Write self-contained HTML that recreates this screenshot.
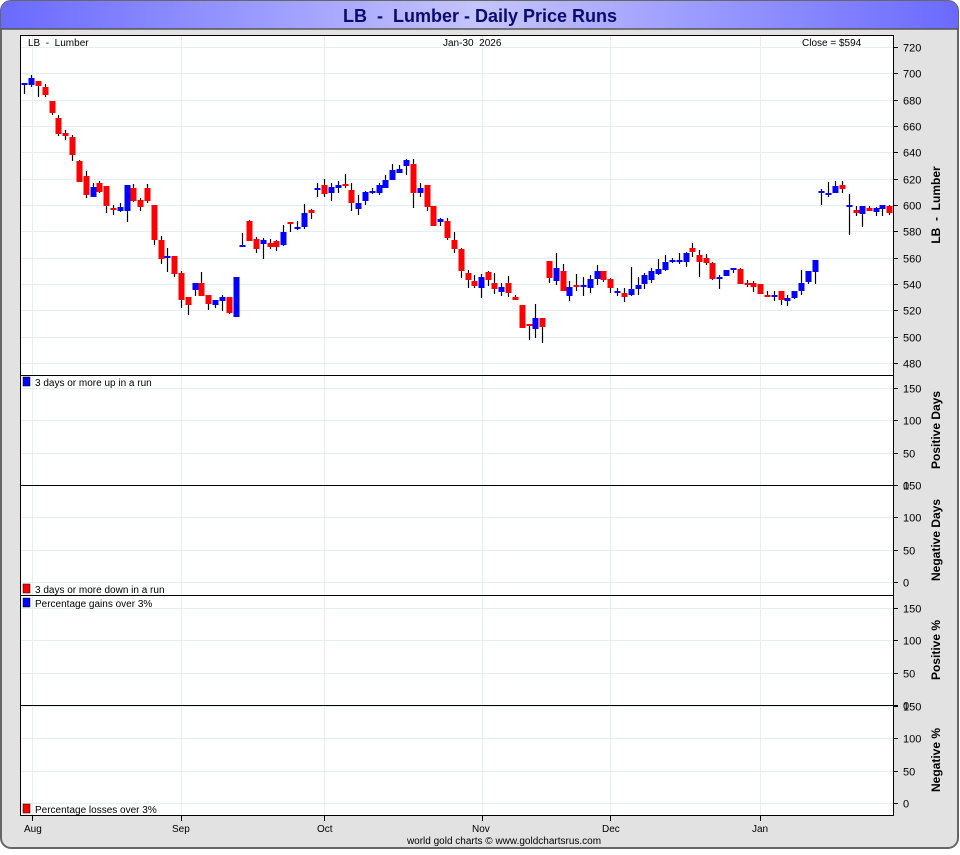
<!DOCTYPE html>
<html><head><meta charset="utf-8"><style>
body{margin:0;width:960px;height:850px;overflow:hidden;background:#fff;font-family:"Liberation Sans",sans-serif}
text{white-space:pre}
</style></head><body>
<svg id="s" width="960" height="850" xmlns="http://www.w3.org/2000/svg" font-family="Liberation Sans, sans-serif" xml:space="preserve">
<defs><linearGradient id="g" x1="0" x2="1"><stop offset="0" stop-color="#6a6aff"/><stop offset="0.5" stop-color="#c4c4ff"/><stop offset="1" stop-color="#6a6aff"/></linearGradient></defs>
<rect x="1" y="1" width="957" height="847" rx="10" fill="#e2e2e2" stroke="#666" stroke-width="2"/>
<path d="M1 29 V11 A10 10 0 0 1 11 1 H948 A10 10 0 0 1 958 11 V29 Z" fill="url(#g)"/>
<line x1="1" y1="29" x2="958" y2="29" stroke="#555" stroke-width="1.5"/>
<text x="480" y="22" text-anchor="middle" font-size="18" font-weight="bold" fill="#0a0a70">LB  -  Lumber - Daily Price Runs</text>
<rect x="20.5" y="35.5" width="873" height="780" fill="#fff" stroke="#000"/>
<g id="grid" stroke="#e4eef7" stroke-width="1"></g>
<g id="c"></g>
<g stroke="#000"><line x1="20" y1="375.5" x2="893" y2="375.5"/><line x1="20" y1="485.5" x2="893" y2="485.5"/><line x1="20" y1="595.5" x2="893" y2="595.5"/><line x1="20" y1="705.5" x2="893" y2="705.5"/><line x1="20" y1="815.5" x2="893" y2="815.5"/></g>
<g font-size="10" fill="#000">
<text x="28" y="46">LB  -  Lumber</text><text x="443" y="46">Jan-30  2026</text><text x="802" y="46">Close = $594</text>
<rect x="23" y="377" width="7" height="9" fill="#00f" stroke="#000" stroke-width=".5"/><text x="35" y="386">3 days or more up in a run</text>
<rect x="23" y="584" width="7" height="9" fill="#f00" stroke="#000" stroke-width=".5"/><text x="35" y="593">3 days or more down in a run</text>
<rect x="23" y="598" width="7" height="9" fill="#00f" stroke="#000" stroke-width=".5"/><text x="35" y="607">Percentage gains over 3%</text>
<rect x="23" y="804" width="7" height="9" fill="#f00" stroke="#000" stroke-width=".5"/><text x="35" y="813">Percentage losses over 3%</text>
<text x="24" y="832">Aug</text><text x="172" y="832">Sep</text><text x="317" y="832">Oct</text><text x="472" y="832">Nov</text><text x="602" y="832">Dec</text><text x="752" y="832">Jan</text>
<text x="504" y="844" text-anchor="middle">world gold charts © www.goldchartsrus.com</text>
</g>
<g id="ax" font-size="11" fill="#000"></g>
<g font-size="12" font-weight="bold" fill="#000">
<text transform="translate(940,205) rotate(-90)" text-anchor="middle">LB  -  Lumber</text>
<text transform="translate(940,430) rotate(-90)" text-anchor="middle">Positive Days</text>
<text transform="translate(940,540) rotate(-90)" text-anchor="middle">Negative Days</text>
<text transform="translate(940,650) rotate(-90)" text-anchor="middle">Positive %</text>
<text transform="translate(940,760) rotate(-90)" text-anchor="middle">Negative %</text>
</g>
</svg>
<script>
var N="http://www.w3.org/2000/svg";
function el(p,t,a,tx){var e=document.createElementNS(N,t);for(var k in a)e.setAttribute(k,a[k]);if(tx!=null)e.textContent=tx;document.getElementById(p).appendChild(e);}
[32,181,324,482,610,760].forEach(function(x){el("grid","line",{x1:x+.5,y1:36,x2:x+.5,y2:815});el("ax","line",{x1:x+.5,y1:816,x2:x+.5,y2:821,stroke:"#000"});});
for(var p=480;p<=720;p+=20){var y=Math.round(47+(720-p)*1.317)+.5;el("grid","line",{x1:21,y1:y,x2:893,y2:y});el("ax","line",{x1:893,y1:y,x2:898,y2:y,stroke:"#000"});el("ax","text",{x:903,y:y+4},p);}
[485,582,705,803].forEach(function(z){for(var v=0;v<=150;v+=50){var y=Math.round(z-v*0.65)+.5;if(y>376&&y<815&&y!=485.5&&y!=705.5)el("grid","line",{x1:21,y1:y,x2:893,y2:y});el("ax","line",{x1:893,y1:y,x2:898,y2:y,stroke:"#000"});el("ax","text",{x:903,y:y+4},v);}});
var C=[[24,83,85,83,94,'b'],[31,78,85,75,87,'b'],[38,81,86,81,97,'r'],[45,87,95,84,97,'r'],[52,101,113,101,115,'r'],[58,118,134,115,136,'r'],[65,133,136,130,140,'r'],[72,137,155,135,161,'r'],[79,161,182,160,182,'r'],[86,176,195,171,198,'r'],[93,187,197,183,197,'b'],[99,183,192,181,193,'r'],[106,186,206,186,213,'r'],[113,208,210,205,215,'r'],[120,207,211,203,212,'b'],[127,185,211,185,222,'b'],[133,188,201,184,202,'r'],[140,200,207,198,211,'r'],[147,188,201,184,203,'r'],[154,205,240,205,245,'r'],[161,240,259,236,264,'r'],[167,256,257,248,272,'b'],[174,256,274,256,277,'r'],[181,273,300,271,308,'r'],[188,297,305,297,315,'r'],[195,283,290,283,296,'b'],[201,283,296,272,296,'r'],[208,295,304,295,310,'r'],[215,300,305,300,308,'b'],[222,297,301,295,311,'b'],[229,297,313,297,314,'r'],[236,277,317,277,317,'b'],
[242,245,246,233,246,'b'],[249,221,241,220,241,'r'],[256,239,249,237,253,'r'],[263,240,244,238,259,'b'],[270,243,247,239,249,'r'],[276,241,247,240,251,'r'],[283,232,245,225,246,'b'],[290,222,224,222,232,'r'],[297,227,228,221,230,'b'],[304,213,227,204,229,'b'],[311,210,213,209,219,'r'],[317,188,190,183,197,'b'],[324,185,194,179,197,'r'],[331,187,193,183,201,'b'],[338,185,188,181,193,'b'],[345,184,186,174,188,'r'],[351,190,203,183,211,'r'],[358,203,209,195,215,'b'],[365,192,201,191,205,'b'],[372,191,192,188,194,'b'],[379,185,193,183,195,'b'],[385,180,188,175,188,'b'],[392,170,180,164,180,'b'],[399,169,173,165,173,'b'],[406,160,166,159,175,'b'],[413,164,193,159,208,'r'],[420,188,193,183,197,'b'],[427,185,207,185,211,'r'],[433,206,226,206,226,'r'],[440,219,222,218,226,'b'],[447,221,238,218,240,'r'],[454,240,249,232,253,'r'],[461,249,271,248,278,'r'],[468,273,280,270,288,'r'],
[474,281,286,275,288,'r'],[481,277,288,274,298,'b'],[488,272,280,271,286,'r'],[494,283,289,273,294,'r'],[501,287,292,283,296,'b'],[508,283,293,276,297,'r'],[515,297,300,295,300,'r'],[522,305,328,305,328,'r'],[529,324,326,324,340,'r'],[535,318,329,304,338,'b'],[542,318,327,318,343,'r'],[549,261,278,261,283,'r'],[556,268,281,253,285,'b'],[563,271,291,264,291,'r'],[569,287,296,281,301,'b'],[576,285,287,274,291,'r'],[583,285,287,277,296,'b'],[590,279,288,275,293,'b'],[597,271,279,265,285,'b'],[603,271,280,271,282,'r'],[610,279,288,278,293,'r'],[617,291,292,288,296,'b'],[624,293,297,288,302,'r'],[631,289,295,267,296,'b'],[638,285,289,277,295,'b'],[644,275,284,273,289,'b'],[651,271,280,268,283,'b'],[658,269,274,259,275,'b'],[665,262,270,255,271,'b'],[672,260,262,258,263,'b'],[679,260,262,253,264,'b'],[686,253,262,252,267,'b'],[692,248,252,243,257,'r'],[699,255,262,250,277,'r'],[706,258,263,254,265,'r'],[712,263,279,262,280,'r'],[719,277,278,275,289,'b'],[726,270,276,270,276,'b'],[733,268,270,268,273,'b'],[740,269,284,268,284,'r'],[747,283,285,280,287,'r'],[753,283,287,281,292,'r'],[760,284,294,284,294,'r'],[767,295,296,291,297,'r'],[774,295,297,291,301,'b'],[781,291,300,291,305,'r'],[787,298,301,295,306,'b'],[794,291,298,291,299,'b'],[801,283,291,270,295,'b'],[808,271,282,271,284,'b'],[815,260,272,260,284,'b'],
[821,191,192,189,205,'b'],[828,193,195,182,197,'b'],[835,186,193,181,193,'b'],[842,185,189,181,193,'r'],[849,205,207,194,235,'b'],[856,210,213,206,216,'r'],[862,206,214,206,227,'b'],[869,208,211,206,211,'r'],[876,208,212,207,216,'b'],[882,205,209,205,216,'b'],[889,206,213,205,215,'r']];
C.forEach(function(c){el("c","line",{x1:c[0]+.5,y1:c[3],x2:c[0]+.5,y2:c[4],stroke:"#000","stroke-width":1.2});var h=Math.max(c[2]-c[1],2);el("c","rect",{x:c[0]-2.5,y:c[1],width:6,height:h,fill:c[5]=='b'?'#0000ff':'#ff0000'});});
</script>
</body></html>
